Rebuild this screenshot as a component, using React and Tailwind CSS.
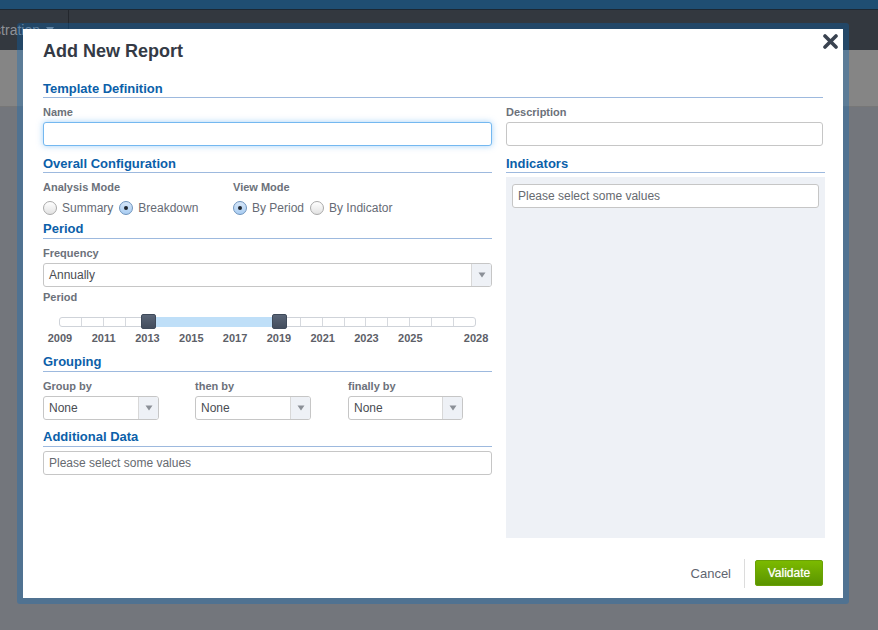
const font = "font-['Liberation_Sans',Arial,sans-serif]";

function Heading({ children, className = "", height = "h-[19px]" }) {
  return (
    <div className={`${height} border-b border-[#9db9de] text-[13px] font-bold leading-5 text-[#0b60a9] ${className}`}>
      {children}
    </div>
  );
}

function Label({ children }) {
  return <div className="h-6 pt-1 text-[11px] font-bold leading-5 text-[#6c717a]">{children}</div>;
}

function Field({ children, focus = false, className = "" }) {
  return (
    <div
      className={`flex h-6 items-center rounded-[3px] border bg-white px-[5px] text-xs text-[#666a70] ${
        focus ? "border-[#74b8f0] shadow-[0_0_6px_rgba(90,170,240,0.55)]" : "border-[#c6c6c6]"
      } ${className}`}
    >
      {children}
    </div>
  );
}

function Select({ value, className = "" }) {
  return (
    <div className={`flex h-6 items-stretch overflow-hidden rounded-[3px] border border-[#c6c6c6] bg-white text-xs text-[#4a4d52] ${className}`}>
      <div className="flex flex-1 items-center px-[5px]">{value}</div>
      <div className="flex w-[20px] items-center justify-center border-l border-[#d8d8d8] bg-[#eef1f6]">
        <svg width="8" height="6" viewBox="0 0 8 6">
          <path d="M0.5 0.5H7.5L4 5.5Z" fill="#8b9097" />
        </svg>
      </div>
    </div>
  );
}

function Radio({ label, checked = false, className = "" }) {
  return (
    <div className={`flex items-center text-xs text-[#666b75] ${className}`}>
      <span
        className={`mr-[5px] flex h-[14px] w-[14px] items-center justify-center rounded-full border ${
          checked
            ? "border-[#6d93bd] bg-gradient-to-b from-[#d6e6f8] to-[#a9cdf2]"
            : "border-[#a9a9a9] bg-gradient-to-b from-[#ffffff] to-[#e2e2e2]"
        }`}
      >
        {checked && <span className="h-1 w-1 rounded-full bg-[#20262e]" />}
      </span>
      {label}
    </div>
  );
}

const YEARS = ["2009", "2011", "2013", "2015", "2017", "2019", "2021", "2023", "2025"];

function Slider() {
  return (
    <div>
      <div className="relative ml-4 mt-[10px] h-[10px] w-[417px]">
        <div className="flex h-full overflow-hidden rounded-[3px] border border-[#cfd3d9] bg-white">
          {Array.from({ length: 19 }).map((_, i) => (
            <div key={i} className="flex-1 border-r border-[#d6d9de] last:border-r-0" />
          ))}
        </div>
        <div className="absolute left-[89px] top-0 h-full w-[131px] bg-[#bfdff8]" />
        <div className="absolute left-[82px] top-[-3px] h-[15px] w-[15px] rounded-[2px] border border-[#3f4a5a] bg-gradient-to-b from-[#5a6577] to-[#434d5d]" />
        <div className="absolute left-[213px] top-[-3px] h-[15px] w-[15px] rounded-[2px] border border-[#3f4a5a] bg-gradient-to-b from-[#5a6577] to-[#434d5d]" />
      </div>
      <div className="mt-[3px] flex h-4 items-center text-[11px] font-bold text-[#5d6068]">
        <div className="flex -ml-[5px]">
          {YEARS.map((y) => (
            <div key={y} className="w-[43.8px] text-center">{y}</div>
          ))}
          <div className="ml-[22px] w-[43.8px] text-center">2028</div>
        </div>
      </div>
    </div>
  );
}

export default function App() {
  return (
    <div className={`relative h-[630px] w-[878px] overflow-hidden bg-[#73767c] ${font}`}>
      <div className="h-[9px] bg-[#1f4e72]" />
      <div className="flex h-[41px] border-t border-[#1c2833] bg-[#33383f]">
        <div className="flex h-full w-[69px] items-center justify-end whitespace-nowrap border-r border-[#23272d] pr-[14px] text-sm text-[#8e9298]">
          stration
          <svg className="ml-[6px] shrink-0" width="8" height="6" viewBox="0 0 8 6">
            <path d="M0 0H8L4 6Z" fill="#8e9298" />
          </svg>
        </div>
      </div>
      <div className="h-[57px] border-b border-[#777] bg-[#858585]" />

      <div className="absolute left-[17px] top-[23px] h-[581px] w-[832px] rounded-[3px] border-[6px] border-[rgba(0,105,194,0.3)] bg-white bg-clip-padding px-5">
        <button className="absolute right-[5px] top-[5px] text-[#3a4350]">
          <svg width="15" height="15" viewBox="0 0 15 15" fill="none" stroke="currentColor" strokeWidth="3.6" strokeLinecap="round">
            <path d="M2 2L13 13M13 2L2 13" />
          </svg>
        </button>

        <div className="h-[50px] text-lg font-bold leading-[44px] text-[#343a45]">Add New Report</div>
        <Heading>Template Definition</Heading>

        <div className="flex">
          <div className="w-[449px]">
            <Label>Name</Label>
            <Field focus />

            <Heading className="mt-2">Overall Configuration</Heading>
            <div className="flex">
              <div className="w-[190px]">
                <Label>Analysis Mode</Label>
                <div className="flex h-[22px] items-center">
                  <Radio label="Summary" />
                  <Radio label="Breakdown" checked className="ml-[6px]" />
                </div>
              </div>
              <div>
                <Label>View Mode</Label>
                <div className="flex h-[22px] items-center">
                  <Radio label="By Period" checked />
                  <Radio label="By Indicator" className="ml-[6px]" />
                </div>
              </div>
            </div>

            <Heading height="h-5">Period</Heading>
            <Label>Frequency</Label>
            <Select value="Annually" />
            <div className="h-5 text-[11px] font-bold leading-5 text-[#6c717a]">Period</div>
            <Slider />

            <Heading className="mt-[6px]" height="h-5">Grouping</Heading>
            <div className="flex">
              <div className="mr-9 w-[116px]">
                <Label>Group by</Label>
                <Select value="None" />
              </div>
              <div className="mr-[37px] w-[116px]">
                <Label>then by</Label>
                <Select value="None" />
              </div>
              <div className="w-[115px]">
                <Label>finally by</Label>
                <Select value="None" />
              </div>
            </div>

            <Heading className="mt-[7px]" height="h-5">Additional Data</Heading>
            <Field className="mt-1">Please select some values</Field>
          </div>

          <div className="ml-[14px] w-[319px]">
            <Label>Description</Label>
            <Field className="w-[317px]" />
            <Heading className="mt-2">Indicators</Heading>
            <div className="mt-1 h-[361px] bg-[#eef1f6] px-[6px] pt-[7px]">
              <Field className="w-[307px]">Please select some values</Field>
            </div>
          </div>
        </div>

        <div className="mt-[21px] flex h-[29px] items-start justify-end">
          <span className="text-[13px] leading-[30px] text-[#5f6570]">Cancel</span>
          <div className="ml-[13px] mr-[10px] h-[29px] w-px bg-[#dcdcdc]" />
          <button className="mt-px h-[26px] w-[68px] rounded-[2px] border border-[#6aa106] bg-gradient-to-b from-[#7cba00] to-[#5a9400] text-xs text-white [text-shadow:0_0_1px_rgba(255,255,255,0.7)]">
            Validate
          </button>
        </div>
      </div>
    </div>
  );
}
